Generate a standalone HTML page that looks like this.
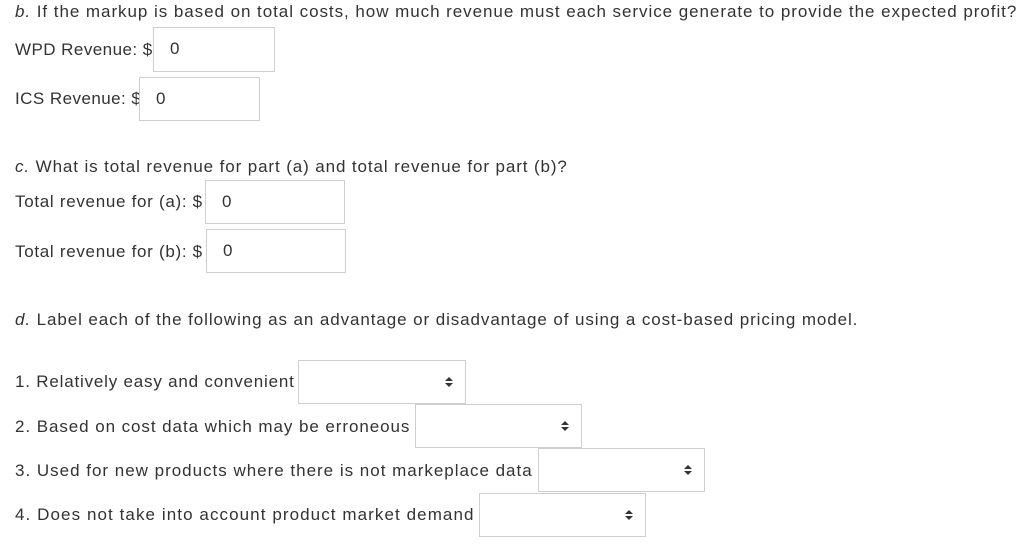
<!DOCTYPE html>
<html><head><meta charset="utf-8"><style>
body{margin:0;width:1024px;height:545px;background:#fff;font-family:"Liberation Sans",sans-serif;color:#333;font-size:17px;position:relative;overflow:hidden}
.t{position:absolute;white-space:nowrap;line-height:20px;letter-spacing:0.9px}
.b{position:absolute;border:1px solid #cfcfcf;box-sizing:border-box;background:#fff}
.v{position:absolute;left:16px;top:11px;font-size:17px}
.ar{position:absolute;right:12px;top:15px;width:8px;height:12px}
</style></head><body>
<div class="t" style="left:15px;top:2px;letter-spacing:0.95px"><i>b.</i> If the markup is based on total costs, how much revenue must each service generate to provide the expected profit?</div>
<div class="t" style="left:15px;top:40px;letter-spacing:0.45px">WPD Revenue: $</div>
<div class="b" style="left:153px;top:27px;width:122px;height:45px"><span class="v">0</span></div>
<div class="t" style="left:15px;top:89px;letter-spacing:0.45px">ICS Revenue: $</div>
<div class="b" style="left:139px;top:77px;width:121px;height:44px"><span class="v">0</span></div>
<div class="t" style="left:15px;top:157px;letter-spacing:0.89px"><i>c.</i> What is total revenue for part (a) and total revenue for part (b)?</div>
<div class="t" style="left:15px;top:192px;letter-spacing:0.7px">Total revenue for (a): $</div>
<div class="b" style="left:205px;top:180px;width:140px;height:44px"><span class="v">0</span></div>
<div class="t" style="left:15px;top:242px;letter-spacing:0.7px">Total revenue for (b): $</div>
<div class="b" style="left:206px;top:229px;width:140px;height:44px"><span class="v">0</span></div>
<div class="t" style="left:15px;top:310px;letter-spacing:0.91px"><i>d.</i> Label each of the following as an advantage or disadvantage of using a cost-based pricing model.</div>
<div class="t" style="left:15px;top:372px;letter-spacing:0.8px">1. Relatively easy and convenient</div>
<div class="b" style="left:298px;top:360px;width:168px;height:44px"><svg class="ar" viewBox="0 0 8 12"><path d="M0 5L4 1L8 5ZM0 7L4 11L8 7Z" fill="#333"/></svg></div>
<div class="t" style="left:15px;top:417px;letter-spacing:0.93px">2. Based on cost data which may be erroneous</div>
<div class="b" style="left:415px;top:404px;width:167px;height:44px"><svg class="ar" viewBox="0 0 8 12"><path d="M0 5L4 1L8 5ZM0 7L4 11L8 7Z" fill="#333"/></svg></div>
<div class="t" style="left:15px;top:461px;letter-spacing:0.99px">3. Used for new products where there is not markeplace data</div>
<div class="b" style="left:538px;top:448px;width:167px;height:44px"><svg class="ar" viewBox="0 0 8 12"><path d="M0 5L4 1L8 5ZM0 7L4 11L8 7Z" fill="#333"/></svg></div>
<div class="t" style="left:15px;top:505px;letter-spacing:1.08px">4. Does not take into account product market demand</div>
<div class="b" style="left:479px;top:493px;width:167px;height:44px"><svg class="ar" viewBox="0 0 8 12"><path d="M0 5L4 1L8 5ZM0 7L4 11L8 7Z" fill="#333"/></svg></div>
</body></html>
